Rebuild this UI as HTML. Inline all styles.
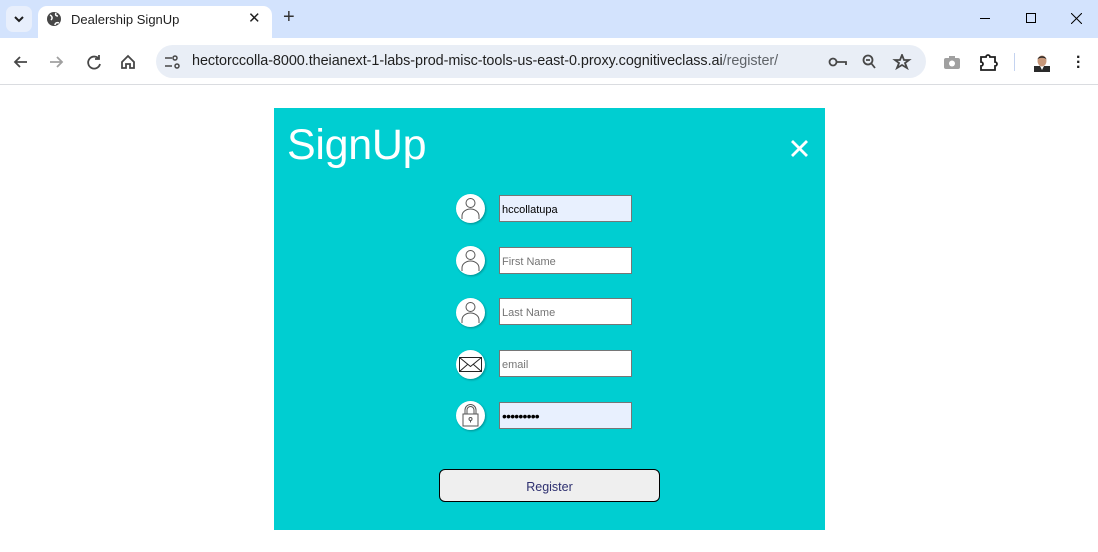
<!DOCTYPE html>
<html><head><meta charset="utf-8"><style>
*{box-sizing:border-box;margin:0;padding:0}
body{width:1098px;height:552px;overflow:hidden;background:#fff;font-family:"Liberation Sans",sans-serif;position:relative}
.abs{position:absolute}
.strip{left:0;top:0;width:1098px;height:38px;background:#d3e3fd}
.tab{left:38px;top:6px;width:234px;height:33px;background:#fff;border-radius:9px 9px 0 0}
.toolbar{left:0;top:38px;width:1098px;height:47px;background:#fff;border-bottom:1px solid #dadce0}
.url{left:156px;top:45px;width:770px;height:33px;background:#e9eef6;border-radius:17px}
.card{left:274px;top:108px;width:551px;height:422px;background:#00ced1}
.inp{left:499px;width:133px;height:27px;border:1px solid #767676;background:#fff;font-family:"Liberation Sans",sans-serif;font-size:11px;padding-left:2px;line-height:28px;color:#757575}
.ic{left:456px;width:29px;height:29px;border-radius:50%;background:#fff;box-shadow:1px 1px 2px rgba(0,0,0,.3)}
</style></head><body>
<div class="abs strip"></div>
<div class="abs" style="left:6px;top:6px;width:26px;height:26px;border-radius:7px;background:#e8effc"></div>
<svg class="abs" style="left:13px;top:14px" width="12" height="10"><path d="M2 3l4 4 4-4" stroke="#1f1f1f" stroke-width="2" fill="none"/></svg>
<div class="abs tab"></div>
<svg class="abs" style="left:46px;top:11px" width="16" height="16"><circle cx="8" cy="8" r="7" fill="#474747"/><path d="M4 4c2 1 3 3 1 5M10 2c-1 2 0 3 2 3M9 14c0-2 2-3 4-2" stroke="#fff" stroke-width="1.5" fill="none"/></svg>
<div class="abs" style="left:71px;top:12px;font-size:13px;color:#1f1f1f">Dealership SignUp</div>
<div class="abs" style="left:248px;top:9px;font-size:15px;color:#1f1f1f">✕</div>
<div class="abs" style="left:283px;top:6px;font-size:20px;color:#333">+</div>
<div class="abs" style="left:980px;top:18px;width:10px;height:1px;background:#000"></div>
<div class="abs" style="left:1026px;top:13px;width:10px;height:10px;border:1px solid #000"></div>
<svg class="abs" style="left:1071px;top:13px" width="11" height="11"><path d="M0 0L11 11M11 0L0 11" stroke="#000"/></svg>
<div class="abs toolbar"></div>
<svg class="abs" style="left:12px;top:54px" width="100" height="16" fill="none" stroke-width="1.8"><path d="M15 8H3M8 3L3 8l5 5" stroke="#474747"/><path d="M38 8h12M45 3l5 5-5 5" stroke="#a0a0a0"/><path d="M87 5a6 6 0 1 0 1 5M87 1v4h-4" stroke="#474747"/></svg>
<svg class="abs" style="left:120px;top:54px" width="16" height="16" fill="none" stroke="#474747" stroke-width="1.8"><path d="M2 8L8 2l6 6v6H10v-4H6v4H2z"/></svg>
<div class="abs url"></div>
<svg class="abs" style="left:163px;top:53px" width="18" height="18" fill="none" stroke="#474747" stroke-width="1.5"><path d="M2 5h7M2 13h7"/><circle cx="12" cy="5" r="2"/><circle cx="14" cy="13" r="2"/></svg>
<div class="abs" style="left:192px;top:53px;font-size:14.4px;color:#1f1f1f;letter-spacing:-0.05px">hectorccolla-8000.theianext-1-labs-prod-misc-tools-us-east-0.proxy.cognitiveclass.ai<span style="color:#5f6368">/register/</span></div>
<svg class="abs" style="left:828px;top:54px" width="90" height="16" fill="none" stroke="#474747" stroke-width="1.8"><circle cx="5" cy="8" r="3.5"/><path d="M9 8h9v3"/><circle cx="40" cy="6" r="4.5"/><path d="M43 9l4 5M38 6h4"/><path d="M74 1l2 5h5l-4 3 2 5-5-3-5 3 2-5-4-3h5z"/></svg>
<svg class="abs" style="left:943px;top:54px" width="18" height="16"><rect x="1" y="4" width="16" height="11" rx="2" fill="#a0a0a0"/><rect x="6" y="2" width="6" height="3" fill="#a0a0a0"/><circle cx="9" cy="9.5" r="3" fill="#fff"/></svg>
<svg class="abs" style="left:979px;top:53px" width="20" height="18" fill="none" stroke="#1f1f1f" stroke-width="1.8"><path d="M2 4h5a2 2 0 0 1 4 0h5v5a2 2 0 0 1 0 4v4H2v-4a2 2 0 0 0 0-4z"/></svg>
<div class="abs" style="left:1014px;top:53px;width:1px;height:18px;background:#c4d3f0"></div>
<svg class="abs" style="left:1032px;top:52px" width="20" height="20"><rect x="2" y="14" width="16" height="6" fill="#2a2a2a"/><path d="M8 14l2 4 2-4" fill="#fff"/><ellipse cx="10" cy="9" rx="4.5" ry="5.5" fill="#c8987a"/><path d="M5.5 8c0-5 9-5 9 0c0-3-9-3-9 0z" fill="#222"/></svg>
<div class="abs" style="left:1076px;top:55px;font-size:16px;line-height:5px;color:#1f1f1f;font-weight:bold">·<br>·<br>·</div>

<div class="abs card"></div>
<div class="abs" style="left:287px;top:121px;font-size:43px;color:#fff;letter-spacing:-0.3px">SignUp</div>
<svg class="abs" style="left:791px;top:140px" width="17" height="17"><path d="M1 1L16 16M16 1L1 16" stroke="#fff" stroke-width="2.8"/></svg>

<div class="abs ic" style="top:194px"></div>
<div class="abs ic" style="top:246px"></div>
<div class="abs ic" style="top:298px"></div>
<div class="abs ic" style="top:350px"></div>
<div class="abs ic" style="top:401px"></div>
<svg class="abs" style="left:456px;top:194px" width="29" height="240" fill="none" stroke="#555" stroke-width="1">
<g><circle cx="14.5" cy="9" r="4.5"/><path d="M6 25v-3a8.5 7 0 0 1 17 0v3"/></g>
<g transform="translate(0,52)"><circle cx="14.5" cy="9" r="4.5"/><path d="M6 25v-3a8.5 7 0 0 1 17 0v3"/></g>
<g transform="translate(0,104)"><circle cx="14.5" cy="9" r="4.5"/><path d="M6 25v-3a8.5 7 0 0 1 17 0v3"/></g>
<g transform="translate(0,156)" stroke="#222"><rect x="3.5" y="7.5" width="22" height="14"/><path d="M3.5 7.5l11 9 11-9M3.5 21.5l8-7M25.5 21.5l-8-7"/></g>
<g transform="translate(0,207)"><path d="M9 13V9a5.5 5.5 0 0 1 11 0v4M11 13V9a3.5 3.5 0 0 1 7 0v4"/><rect x="7" y="13" width="15" height="12"/><circle cx="14.5" cy="18" r="1.5"/><path d="M14.5 19.5v2"/></g>
</svg>

<div class="abs inp" style="top:195px;background:#e8f0fe;color:#000">hccollatupa</div>
<div class="abs inp" style="top:247px">First Name</div>
<div class="abs inp" style="top:298px">Last Name</div>
<div class="abs inp" style="top:350px">email</div>
<div class="abs inp" style="top:402px;background:#e8f0fe;color:#000;font-size:14px;letter-spacing:-0.8px;line-height:26px">•••••••••</div>

<div class="abs" style="left:439px;top:469px;width:221px;height:33px;border:1px solid #000;border-radius:6px;background:#efefef;text-align:center;line-height:34px;font-family:'Liberation Sans',sans-serif;font-size:12.5px;color:#2e3070">Register</div>
</body></html>
